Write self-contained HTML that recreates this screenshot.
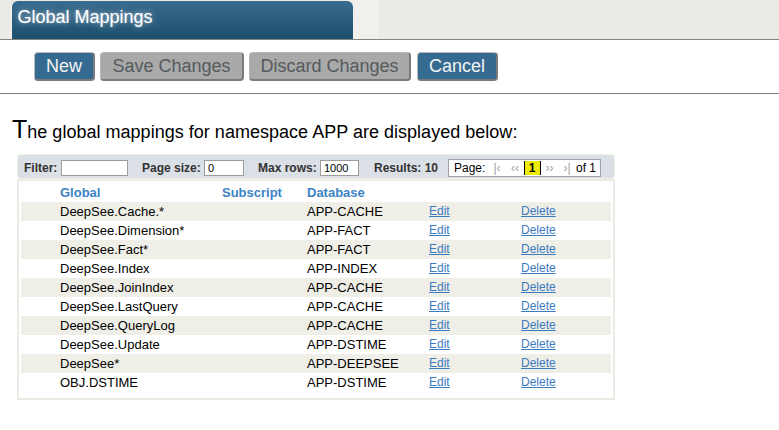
<!DOCTYPE html>
<html><head><meta charset="utf-8">
<style>
*{box-sizing:border-box}
html,body{margin:0;padding:0;background:#fff;width:779px;height:430px;overflow:hidden;font-family:"Liberation Sans",sans-serif;}
#hdr{position:absolute;left:0;top:0;width:779px;height:40px;background:#eceae5;}
#hdr .light{position:absolute;left:353px;top:0;width:26px;height:39px;background:#f1f0ec;}
#hdr .line{position:absolute;left:0;top:39px;width:779px;height:1px;background:#838383;}
#tab{position:absolute;left:12px;top:1px;width:341px;height:38px;border-radius:6px 6px 0 0;background:linear-gradient(#3a6c8f,#1c4f6d);}
#tab span{position:absolute;left:5.5px;top:6px;font-size:18px;color:#fff;text-shadow:0 0 6px rgba(255,255,255,0.55),0 0 2px rgba(255,255,255,0.4);white-space:nowrap;}
#tab .edge{position:absolute;left:-1px;top:4px;width:1px;height:34px;background:#f6f4f0;}
.btn{position:absolute;top:52px;height:29px;border-radius:4px;font-size:18px;line-height:27px;text-align:center;white-space:nowrap;border-style:solid;border-width:1px 2px 2px 1px;border-color:#b8b8b8 #7a7a7a #7a7a7a #b8b8b8;}
.blue{background:#356b90;color:#f4f4f4;}
.grey{background:#a9a9a9;color:#555a5e;}
#rule{position:absolute;left:0;top:93px;width:779px;height:1px;background:#808080;}
#intro{position:absolute;left:12px;top:115px;font-size:18px;color:#000;white-space:nowrap;letter-spacing:0.02px;}
#intro b{letter-spacing:0;}
#intro b{font-weight:normal;font-size:25px;}
#tb{position:absolute;left:18px;top:155px;width:596px;height:23px;background:#dbdfe6;border-radius:3px;box-shadow:0 0 0 1px #efeee7;font-size:12px;color:#333;}
#tb .lbl{position:absolute;top:6px;font-weight:bold;white-space:nowrap;}
#tb .inp{position:absolute;top:5px;height:16px;border:1px solid #9c9c9c;background:#fff;font-size:11px;line-height:15px;padding-left:3px;color:#000;}
#pager{position:absolute;left:430px;top:4px;width:153px;height:18px;border:1px solid #a0a0a0;background:#fff;font-size:12px;color:#000;}
#cur{left:75px;top:1px !important;width:17px;height:14px;background:#f0ec00;border-left:1.5px solid #000;border-right:1.5px solid #000;font-weight:bold;text-align:center;line-height:14px;padding-right:1px;}
#pager span{position:absolute;top:1px;white-space:nowrap;}
#pager .g{color:#a0a0a0;}
#tbl{position:absolute;left:17px;top:179px;width:598px;height:221px;border:2px solid #ecebe3;background:#fff;}
table{position:absolute;left:2px;top:2px;border-collapse:collapse;width:590px;font-size:13px;}
td,th{padding:0;height:19px;white-space:nowrap;text-align:left;}
th{color:#3c83c6;font-weight:bold;}
tr.s td{background:#efeee7;}
a{color:#3b7bbf;text-decoration:underline;font-size:12px;position:relative;top:-1px;}
</style></head><body>
<div id="hdr"><div class="light"></div><div class="line"></div>
<div id="tab"><div class="edge"></div><span>Global Mappings</span></div>
</div>
<div class="btn blue" style="left:34px;width:61px;">New</div>
<div class="btn grey" style="left:100px;width:144px;">Save Changes</div>
<div class="btn grey" style="left:249px;width:162px;">Discard Changes</div>
<div class="btn blue" style="left:417px;width:81px;">Cancel</div>
<div id="rule"></div>
<div id="intro"><b>T</b>he global mappings for namespace APP are displayed below:</div>
<div id="tb">
<span class="lbl" style="left:6px">Filter:</span><div class="inp" style="left:43px;width:67px;"></div>
<span class="lbl" style="left:124px">Page size:</span><div class="inp" style="left:186px;width:40px;">0</div>
<span class="lbl" style="left:240px">Max rows:</span><div class="inp" style="left:302px;width:39px;">1000</div>
<span class="lbl" style="left:356px">Results: 10</span>
<div id="pager"><span style="left:5px">Page:</span><span class="g" style="left:44.5px">|&lsaquo;</span><span class="g" style="left:62px">&lsaquo;&lsaquo;</span><span id="cur">1</span><span class="g" style="left:96.5px">&rsaquo;&rsaquo;</span><span class="g" style="left:114.5px">&rsaquo;|</span><span style="left:127px">of 1</span></div>
</div>
<div id="tbl">
<table>
<colgroup><col style="width:39px"><col style="width:162px"><col style="width:85px"><col style="width:122px"><col style="width:92px"><col></colgroup>
<tr><th></th><th>Global</th><th>Subscript</th><th>Database</th><th></th><th></th></tr>
<tr class="s"><td></td><td>DeepSee.Cache.*</td><td></td><td>APP-CACHE</td><td><a>Edit</a></td><td><a>Delete</a></td></tr>
<tr><td></td><td>DeepSee.Dimension*</td><td></td><td>APP-FACT</td><td><a>Edit</a></td><td><a>Delete</a></td></tr>
<tr class="s"><td></td><td>DeepSee.Fact*</td><td></td><td>APP-FACT</td><td><a>Edit</a></td><td><a>Delete</a></td></tr>
<tr><td></td><td>DeepSee.Index</td><td></td><td>APP-INDEX</td><td><a>Edit</a></td><td><a>Delete</a></td></tr>
<tr class="s"><td></td><td>DeepSee.JoinIndex</td><td></td><td>APP-CACHE</td><td><a>Edit</a></td><td><a>Delete</a></td></tr>
<tr><td></td><td>DeepSee.LastQuery</td><td></td><td>APP-CACHE</td><td><a>Edit</a></td><td><a>Delete</a></td></tr>
<tr class="s"><td></td><td>DeepSee.QueryLog</td><td></td><td>APP-CACHE</td><td><a>Edit</a></td><td><a>Delete</a></td></tr>
<tr><td></td><td>DeepSee.Update</td><td></td><td>APP-DSTIME</td><td><a>Edit</a></td><td><a>Delete</a></td></tr>
<tr class="s"><td></td><td>DeepSee*</td><td></td><td>APP-DEEPSEE</td><td><a>Edit</a></td><td><a>Delete</a></td></tr>
<tr><td></td><td>OBJ.DSTIME</td><td></td><td>APP-DSTIME</td><td><a>Edit</a></td><td><a>Delete</a></td></tr>
</table>
</div>
</body></html>
